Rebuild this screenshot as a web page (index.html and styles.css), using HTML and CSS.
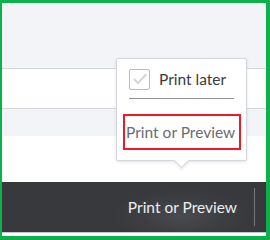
FILE: index.html
```html
<!DOCTYPE html>
<html>
<head>
<meta charset="utf-8">
<link rel="stylesheet" href="styles.css">
</head>
<body>
<div class="frame">
  <div class="band gray top"></div>
  <div class="band white row1"></div>
  <div class="band gray mid"></div>
  <div class="band white low"></div>
  <div class="bar">
    <span class="bar-label">Print or Preview</span>
    <span class="bar-sep"></span>
  </div>
  <div class="foot"></div>

  <div class="popover">
    <label class="check-row">
      <span class="checkbox">
        <svg width="16" height="16" viewBox="0 0 16 16"><path d="M2.5 8.5 L6 12 L13.5 4" fill="none" stroke="#d3d6db" stroke-width="2.2" stroke-linecap="round" stroke-linejoin="round"/></svg>
      </span>
      <span class="check-label">Print later</span>
    </label>
    <div class="divider"></div>
    <div class="action">Print or Preview</div>
    <span class="arrow"></span>
  </div>
</div>
</body>
</html>
```
FILE: styles.css
```css
html, body {
  margin: 0;
  padding: 0;
  background: #fff;
}
body {
  font-family: Lato, "Open Sans", sans-serif;
}
.frame {
  position: relative;
  width: 264px;
  height: 233px;
  border-style: solid;
  border-color: #0db14b;
  border-width: 3px 4px 4px 2px;
  display: flex;
  flex-direction: column;
  overflow: hidden;
}
.band { flex: none; }
.gray { background: #f3f4f8; }
.white { background: #fff; }
.top { height: 65px; border-bottom: 1px solid #d4d7dc; }
.row1 { height: 39px; border-bottom: 1px solid #d4d7dc; }
.mid { height: 27px; }
.low { height: 46px; }
.bar {
  flex: none;
  height: 50px;
  background: radial-gradient(ellipse 70px 28px at 180px 34px, #4a4b4f 0%, #3d3e42 60%, #38393d 100%);
  background-color: #393a3d;
  border-bottom: 1px solid #c4c6ca;
  display: flex;
  align-items: center;
  justify-content: flex-end;
}
.bar-label {
  color: #eceef1;
  font-size: 15.5px;
  margin-right: 17px;
  margin-top: 0;
}
.bar-sep {
  width: 1px;
  height: 38px;
  background: #76777c;
  margin-right: 11px;
}
.foot { flex: none; height: 3px; background: #fff; }

.popover {
  position: absolute;
  left: 114px;
  top: 55px;
  width: 129px;
  height: 101px;
  background: #fff;
  border: 1px solid #d4d7dc;
  border-radius: 2px;
  box-shadow: 0 1px 3px rgba(0,0,0,0.12);
  display: flex;
  flex-direction: column;
  padding: 0;
}
.check-row {
  display: flex;
  align-items: center;
  margin: 9px 0 0 12px;
  height: 22px;
}
.checkbox {
  width: 19px;
  height: 19px;
  border: 1.5px solid #b9bbbf;
  border-radius: 2px;
  display: flex;
  align-items: center;
  justify-content: center;
  background: #fff;
}
.check-label {
  margin-left: 9px;
  font-size: 15.5px;
  color: #393a3d;
}
.divider {
  margin: 8px 12px 0 12px;
  height: 1px;
  background: #8d9096;
}
.action {
  margin: 15px 5px 0 6px;
  height: 32px;
  border: 2px solid #ec1c24;
  font-size: 15.5px;
  color: #6b6c72;
  display: flex;
  align-items: center;
  padding-left: 1px;
}
.arrow {
  position: absolute;
  left: 59px;
  bottom: -6px;
  width: 10px;
  height: 10px;
  background: #fff;
  border-right: 1px solid #d4d7dc;
  border-bottom: 1px solid #d4d7dc;
  transform: rotate(45deg);
  box-shadow: 2px 2px 2px rgba(0,0,0,0.06);
}
```
